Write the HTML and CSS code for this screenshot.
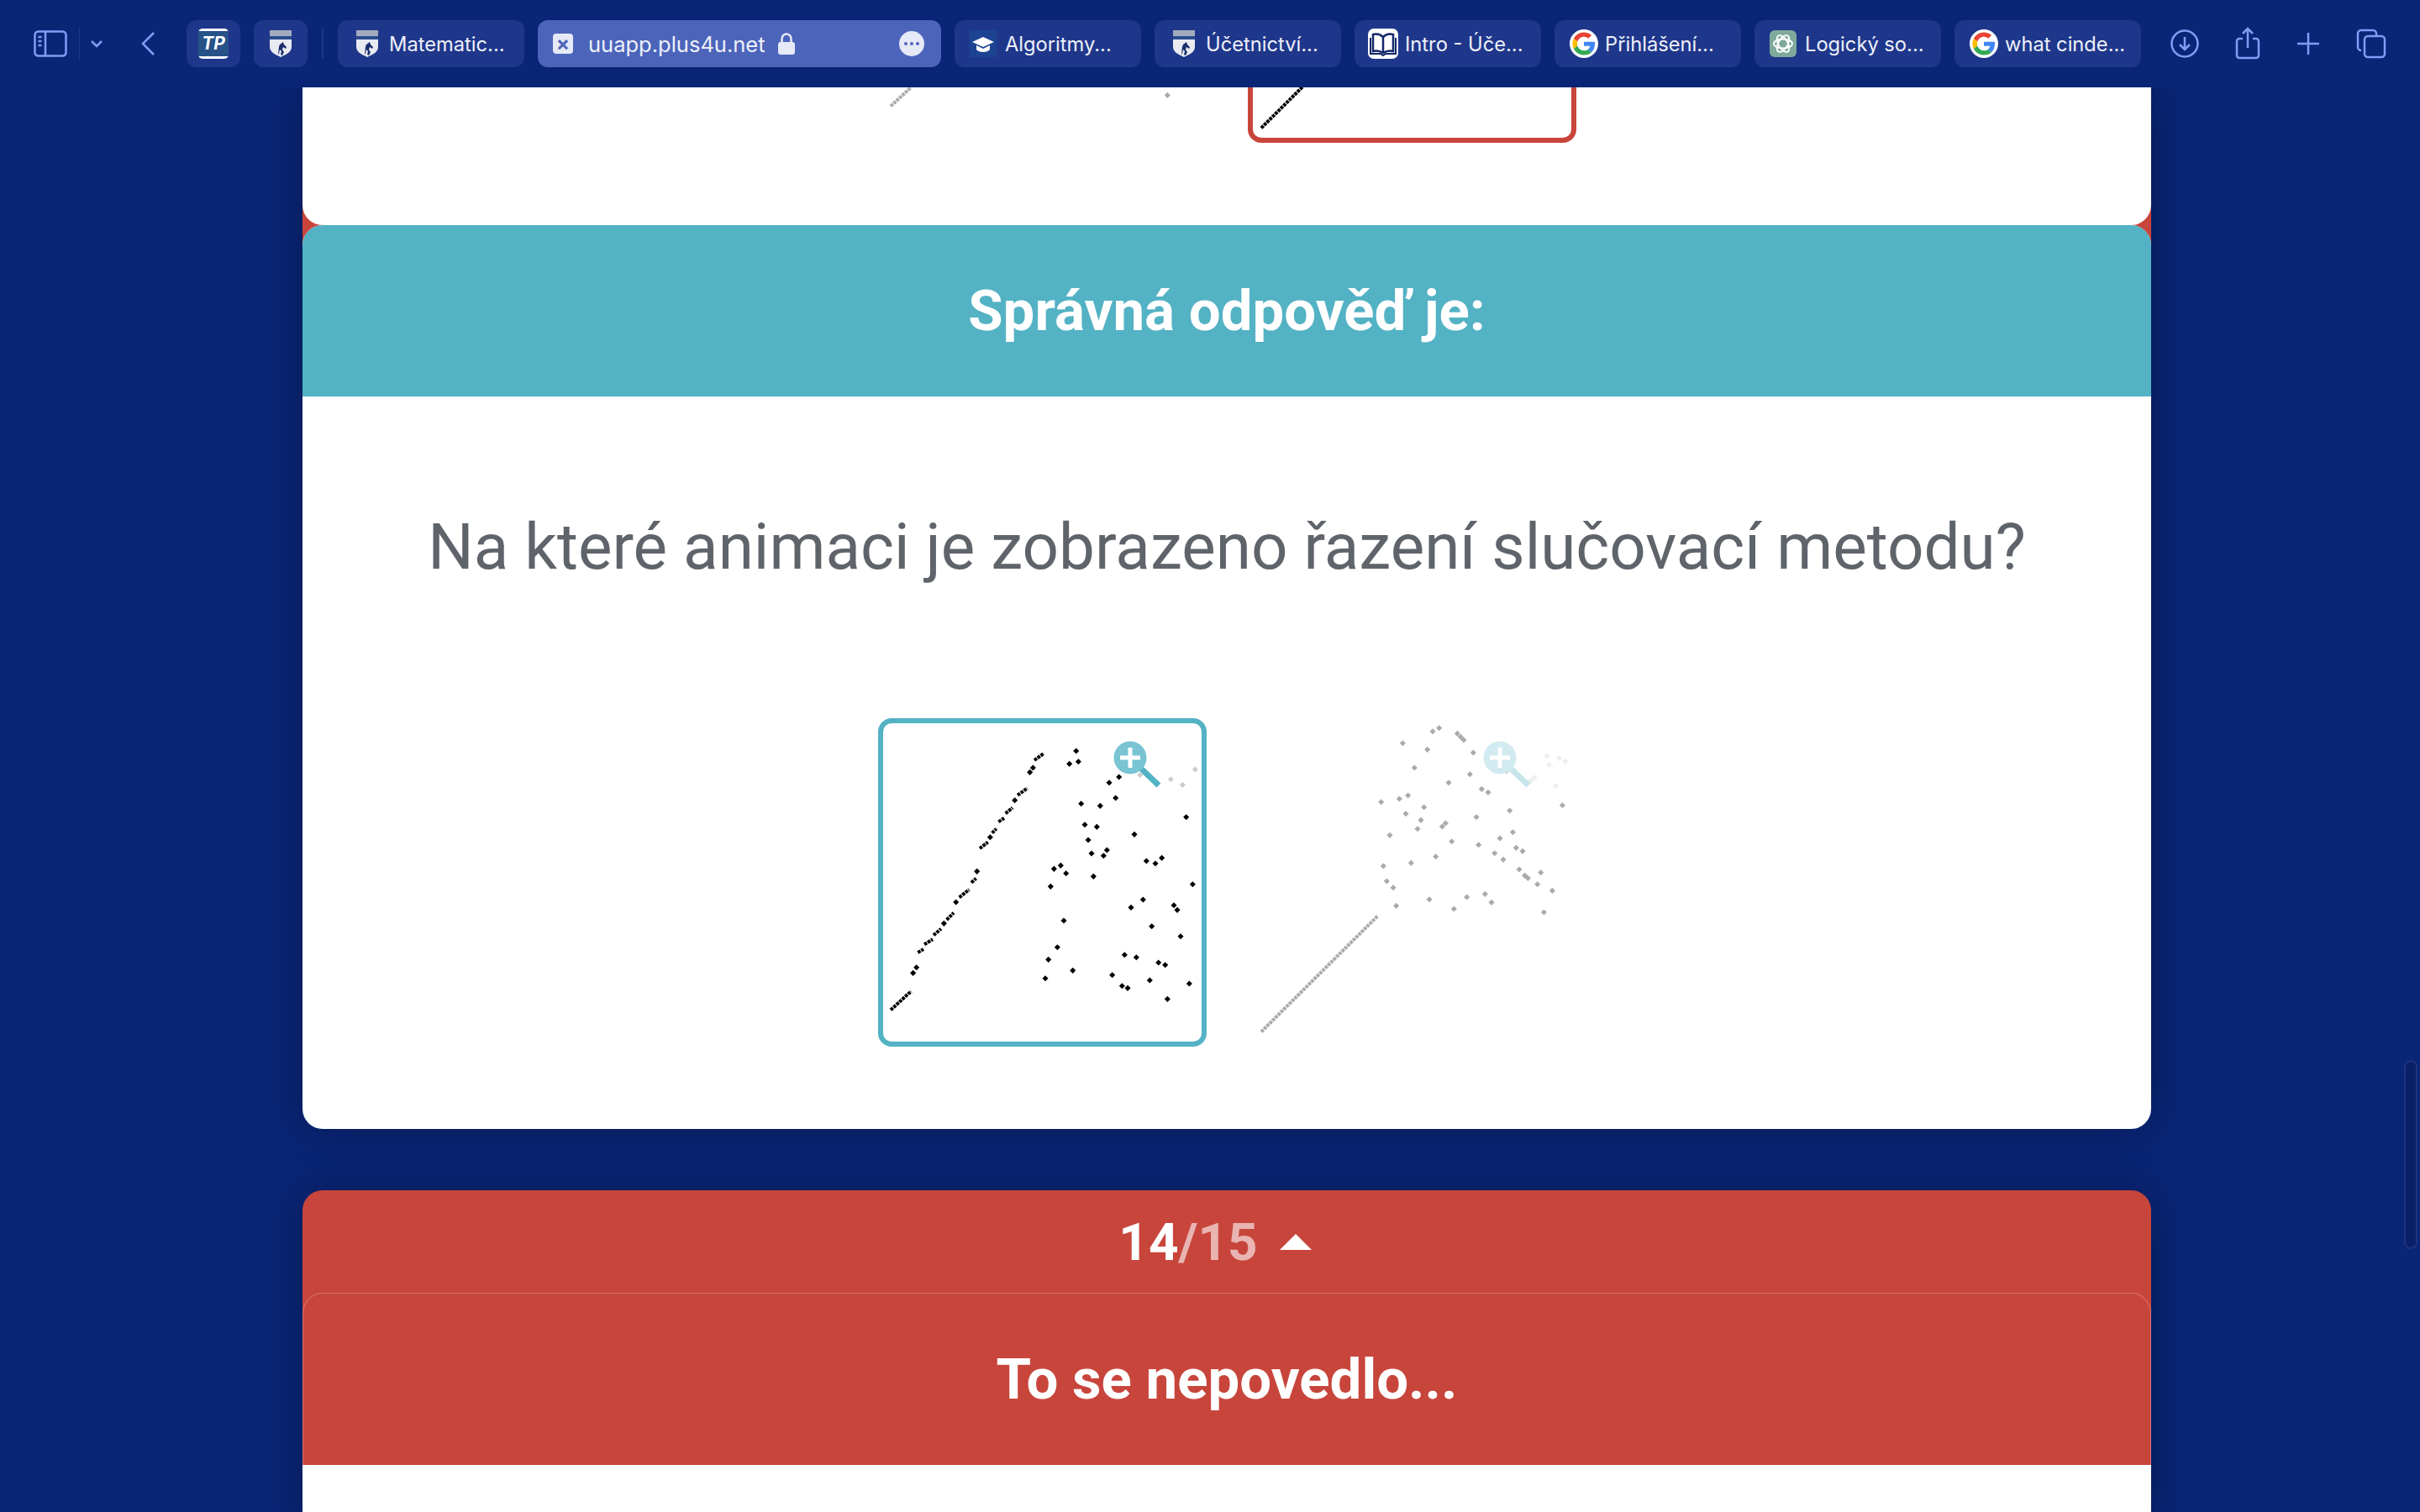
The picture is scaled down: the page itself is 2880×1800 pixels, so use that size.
FILE: index.html

```html
<!DOCTYPE html>
<html lang="cs">
<head>
<meta charset="utf-8"/>
<title>uuapp.plus4u.net</title>
<link rel="stylesheet" href="styles.css">
</head>
<body>

<svg class="sprite">
  <defs>
    <g id="shield">
      <path fill="#e9ebf2" d="M0 10h26v10c0 6-7 9-13 12C7 29 0 26 0 20z"/>
      <rect fill="#a3abbd" width="26" height="7"/>
      <rect fill="#2a4c90" y="7" width="26" height="4"/>
      <path fill="#1c2f6e" d="M10 29c1-5 0-8 2-12l4-3 1 3 3 3-1 2-3-2-1 3 2 3-2 4-2-1 1-4-2-2-1 5z"/>
    </g>
    <g id="google">
      <circle cx="24" cy="24" r="30" fill="#fff"/>
      <path fill="#ea4335" d="M24 9.5c3.54 0 6.71 1.22 9.21 3.6l6.85-6.85C35.9 2.38 30.47 0 24 0 14.62 0 6.51 5.38 2.56 13.22l7.98 6.19C12.43 13.72 17.74 9.5 24 9.5z"/>
      <path fill="#4285f4" d="M46.98 24.55c0-1.57-.15-3.09-.38-4.55H24v9.02h12.94c-.58 2.96-2.26 5.48-4.78 7.18l7.73 6c4.51-4.18 7.09-10.36 7.09-17.65z"/>
      <path fill="#fbbc05" d="M10.53 28.59c-.48-1.45-.76-2.99-.76-4.59s.27-3.14.76-4.59l-7.98-6.19C.92 16.46 0 20.12 0 24c0 3.88.92 7.54 2.56 10.78l7.97-6.19z"/>
      <path fill="#34a853" d="M24 48c6.48 0 11.93-2.13 15.89-5.81l-7.73-6c-2.15 1.45-4.92 2.3-8.16 2.3-6.26 0-11.57-4.22-13.47-9.91l-7.98 6.19C6.51 42.62 14.62 48 24 48z"/>
    </g>
    <!-- the two animation frames, coords taken at 3x -->
    <g id="anim-a">
      <path class="dash" d="M90 1087L163 1020M187 882L207 870M210 853L240 835M243 820L270 797M290 765L315 740M335 685L370 657M378 632L395 617M408 510L437 488M452 455L467 440M475 415L495 402M500 385L525 365M543 320L578 295M603 195L635 172"/>
      <path class="dots" d="M170 955l.1.1M182 935l.1.1M280 778l.1.1M323 702l.1.1M398 592l.1.1M445 470l.1.1M533 338l.1.1M587 238l.1.1M598 222l.1.1M752 162l.1.1M728 208l.1.1M760 200l.1.1M905 255l.1.1M870 275l.1.1M893 330l.1.1M770 350l.1.1M838 358l.1.1M783 425l.1.1M826 433l.1.1M960 460l.1.1M1145 398l.1.1M795 480l.1.1M807 528l.1.1M862 516l.1.1M850 536l.1.1M1003 555l.1.1M1035 564l.1.1M1058 544l.1.1M673 583l.1.1M697 571l.1.1M716 599l.1.1M661 646l.1.1M814 610l.1.1M1168 638l.1.1M948 721l.1.1M991 693l.1.1M1101 713l.1.1M1113 730l.1.1M708 768l.1.1M1022 788l.1.1M1125 824l.1.1M685 863l.1.1M653 907l.1.1M925 890l.1.1M967 899l.1.1M1046 918l.1.1M1070 926l.1.1M740 946l.1.1M642 974l.1.1M881 962l.1.1M916 1001l.1.1M936 1009l.1.1M1015 981l.1.1M1156 993l.1.1M1078 1048l.1.1"/>
      <path class="dots faded" d="M980 248l.1.1M1090 263l.1.1M1132 283l.1.1M1177 228l.1.1"/>
    </g>
    <g id="anim-b">
      <path class="dash" d="M93 1165L510 750"/>
      <path class="dots" d="M705 92l.1.1M728 80l.1.1M793 100l.1.1M805 112l.1.1M816 123l.1.1M598 134l.1.1M686 157l.1.1M850 168l.1.1M938 145l.1.1M640 222l.1.1M838 245l.1.1M968 233l.1.1M762 275l.1.1M880 298l.1.1M903 310l.1.1M521 344l.1.1M586 333l.1.1M617 321l.1.1M674 363l.1.1M609 386l.1.1M663 409l.1.1M651 440l.1.1M739 432l.1.1M751 420l.1.1M861 398l.1.1M980 375l.1.1M1168 356l.1.1M991 452l.1.1M552 463l.1.1M773 485l.1.1M869 497l.1.1M945 474l.1.1M1003 508l.1.1M1026 520l.1.1M926 527l.1.1M716 539l.1.1M957 550l.1.1M628 562l.1.1M529 573l.1.1M1014 585l.1.1M1034 607l.1.1M1045 616l.1.1M1091 596l.1.1M541 627l.1.1M564 650l.1.1M1079 638l.1.1M1132 661l.1.1M892 673l.1.1M827 684l.1.1M693 692l.1.1M915 703l.1.1M575 715l.1.1M781 726l.1.1M1102 738l.1.1"/>
      <path class="dots faded" d="M1113 180l.1.1M1156 188l.1.1M1178 199l.1.1M1121 211l.1.1M1068 257l.1.1M1055 268l.1.1M1144 287l.1.1"/>
    </g>
    <g id="zoom-badge">
      <path d="M33 33L54 53" fill="none" stroke="#53b2c4" stroke-width="7"/>
      <circle cx="20" cy="20" r="19.5" fill="#78c4d2"/>
      <path d="M8 17.500h9.500V8h5v9.500H32v5h-9.500V32h-5v-9.500H8z" fill="#fff"/>
    </g>
  </defs>
</svg>

<header class="toolbar">
  <div class="tool-group">
    <svg class="tool sidebar-icon" width="40" height="32" viewBox="0 0 40 32"><rect x="1.500" y="1.500" width="37" height="29" rx="4"/><path d="M14 1.500v29M5.500 8h4M5.500 13h4M5.500 18h4"/></svg>
    <span class="tool-sep"></span>
    <svg class="tool" width="16" height="10" viewBox="0 0 16 10"><path d="M2 2l6 6 6-6"/></svg>
    <svg class="tool back-icon" width="18" height="30" viewBox="0 0 18 30"><path d="M16 2L3 15l13 13"/></svg>
  </div>

  <div class="tab tab-pinned">
    <svg width="36" height="36" viewBox="0 0 36 36"><rect width="36" height="36" rx="5" fill="#fff"/><rect y="3" width="36" height="30" fill="#265288"/><text x="18" y="25" class="tp-text">TP</text></svg>
  </div>
  <div class="tab tab-pinned">
    <svg width="26" height="32" viewBox="0 0 26 32"><use href="#shield"/></svg>
  </div>
  <span class="pin-sep"></span>

  <div class="tab"><svg width="26" height="32" viewBox="0 0 26 32"><use href="#shield"/></svg><span>Matematic...</span></div>
  <div class="tab tab-active">
    <span class="tab-close">×</span>
    <span class="tab-url">uuapp.plus4u.net</span>
    <svg class="tab-lock" width="20" height="26" viewBox="0 0 20 26"><path d="M4.500 12V7a5.500 5.500 0 0 1 11 0v5" fill="none" stroke="#e6e9f6" stroke-width="2.500"/><rect y="11" width="20" height="15" rx="3" fill="#e6e9f6"/></svg>
    <span class="tab-more"><i></i><i></i><i></i></span>
  </div>
  <div class="tab tab-square"><svg width="32" height="32" viewBox="0 0 32 32"><rect width="32" height="32" fill="#1c4391"/><path d="M16 8L3 14l13 6 13-6z" fill="#fff"/><path d="M8 18v5c3 4 13 4 16 0v-5l-8 4z" fill="#fff"/></svg><span>Algoritmy...</span></div>
  <div class="tab"><svg width="26" height="32" viewBox="0 0 26 32"><use href="#shield"/></svg><span>Účetnictví...</span></div>
  <div class="tab tab-tight"><svg width="36" height="36" viewBox="0 0 36 36"><rect width="36" height="36" rx="7" fill="#fff"/><path d="M18 10c-3-3-8-4-12-3v20c4-1 9 0 12 2 3-2 8-3 12-2V7c-4-1-9 0-12 3zM18 10v19" fill="none" stroke="#15286a" stroke-width="2.500"/><path d="M3 11v19h12l3 2 3-2h12V11" fill="none" stroke="#15286a" stroke-width="2"/></svg><span>Intro - Úče...</span></div>
  <div class="tab tab-google"><svg width="34" height="34" viewBox="-6 -6 60 60"><use href="#google"/></svg><span>Přihlášení...</span></div>
  <div class="tab tab-square"><svg width="32" height="32" viewBox="0 0 32 32"><rect width="32" height="32" rx="6" fill="#7fa99b"/><g fill="none" stroke="#fff" stroke-width="1.800"><ellipse cx="16" cy="16" rx="11" ry="5.500"/><ellipse cx="16" cy="16" rx="11" ry="5.500" transform="rotate(60 16 16)"/><ellipse cx="16" cy="16" rx="11" ry="5.500" transform="rotate(120 16 16)"/></g></svg><span>Logický so...</span></div>
  <div class="tab tab-google"><svg width="34" height="34" viewBox="-6 -6 60 60"><use href="#google"/></svg><span>what cinde...</span></div>

  <div class="tool-group tool-right">
    <svg class="tool" width="34" height="34" viewBox="0 0 34 34"><circle cx="17" cy="17" r="15.500"/><path d="M17 9v15M11 18l6 6 6-6"/></svg>
    <svg class="tool" width="30" height="40" viewBox="0 0 30 40"><path d="M9 14H5a3 3 0 0 0-3 3v17a3 3 0 0 0 3 3h20a3 3 0 0 0 3-3V17a3 3 0 0 0-3-3h-4M15 25V3M9 8l6-6 6 6"/></svg>
    <svg class="tool" width="28" height="28" viewBox="0 0 28 28"><path d="M14 1v26M1 14h26"/></svg>
    <svg class="tool" width="36" height="36" viewBox="0 0 36 36"><path d="M6 26a4 4 0 0 1-4-4V6a4 4 0 0 1 4-4h14a4 4 0 0 1 4 4v3"/><rect x="10" y="9" width="24" height="25" rx="4"/></svg>
  </div>
</header>

<main class="page">
  <div class="stack">
    <div class="prev-wrap">
      <section class="prev-card">
        <div class="tiles">
          <div class="tile tile-dim"><svg class="anim" viewBox="63 63 1137 1137"><use href="#anim-a"/></svg><svg class="zoom-badge" viewBox="0 0 58 58"><use href="#zoom-badge"/></svg></div>
          <div class="tile tile-wrong"><svg class="anim" viewBox="63 63 1137 1137"><use href="#anim-b"/></svg><svg class="zoom-badge" viewBox="0 0 58 58"><use href="#zoom-badge"/></svg></div>
        </div>
      </section>
    </div>

    <section class="answer-card">
      <h2 class="card-head head-teal">Správná odpověď je:</h2>
      <div class="answer-body">
        <p class="question">Na které animaci je zobrazeno řazení slučovací metodu?</p>
        <div class="tiles">
          <div class="tile tile-right"><svg class="anim" viewBox="63 63 1137 1137"><use href="#anim-a"/></svg><svg class="zoom-badge" viewBox="0 0 58 58"><use href="#zoom-badge"/></svg></div>
          <div class="tile tile-dim"><svg class="anim" viewBox="63 63 1137 1137"><use href="#anim-b"/></svg><svg class="zoom-badge" viewBox="0 0 58 58"><use href="#zoom-badge"/></svg></div>
        </div>
      </div>
    </section>
  </div>

  <section class="next-card">
    <div class="counter">
      <span class="count">14<span class="count-total">/15</span></span>
      <span class="caret"></span>
    </div>
    <h2 class="card-head head-red">To se nepovedlo...</h2>
    <div class="next-body"></div>
  </section>
</main>

<div class="scroll-thumb"></div>

</body>
</html>
```

FILE: styles.css

```css
html, body { height: 100%; }
body {
  margin: 0;
  height: 1800px;
  overflow: hidden;
  background: #0a2576;
  font-family: Roboto, "Liberation Sans", sans-serif;
}
.sprite { display: none; }

/* browser bar */
.toolbar {
  position: relative;
  z-index: 2;
  display: flex;
  align-items: center;
  gap: 16px;
  height: 104px;
  padding: 0 0 0 40px;
  box-sizing: border-box;
  background: #0a2576;
  font-family: Inter, "Noto Sans", sans-serif;
  font-size: 23.7px;
  color: #eef0fa;
}
.tool-group { display: flex; align-items: center; }
.tool { fill: none; stroke: #7f9df5; stroke-width: 2.5; flex: none; }
.sidebar-icon { margin-right: 14px; }
.tool-sep { width: 1px; height: 40px; background: #1f378b; margin-right: 12px; }
.back-icon { margin: 0 21px 0 44px; }
.tool-right { margin-left: 19px; gap: 43px; }
.tab {
  display: flex;
  align-items: center;
  flex: none;
  gap: 13px;
  width: 222px;
  height: 56px;
  padding: 0 0 0 22px;
  box-sizing: border-box;
  border-radius: 12px;
  background: #1f378b;
  white-space: nowrap;
}
.tab-tight { gap: 8px; padding-left: 16px; }
.tab-google { gap: 8px; padding-left: 18px; }
.tab-square { gap: 10px; padding-left: 18px; }
.tab-pinned { width: 64px; padding: 0; justify-content: center; }
.tp-text { fill: #fff; font: italic 700 21px Inter, sans-serif; text-anchor: middle; }
.pin-sep { width: 2px; height: 36px; margin: 0 1px; background: #1f378b; }
.tab-active {
  width: 480px;
  padding: 0 20px 0 18px;
  background: #4c65bb;
  gap: 0;
}
.tab-close {
  width: 24px;
  height: 24px;
  border-radius: 4px;
  background: #e6e9f6;
  color: #4c65bb;
  font-size: 24px;
  line-height: 23px;
  font-weight: 700;
  text-align: center;
}
.tab-url { margin-left: 18px; font-size: 25.5px; }
.tab-lock { margin-left: 15px; }
.tab-more {
  display: flex;
  align-items: center;
  justify-content: center;
  gap: 3px;
  width: 30px;
  height: 30px;
  margin-left: auto;
  border-radius: 50%;
  background: #e6e9f6;
}
.tab-more i { width: 4px; height: 4px; border-radius: 50%; background: #4c65bb; }

/* quiz cards */
.page { width: 2200px; margin-left: 360px; }
.stack {
  border-radius: 0 0 24px 24px;
  box-shadow: 0 0 50px rgba(0,0,0,0.3);
}
.prev-wrap {
  height: 188px;
  margin-bottom: -24px;
  background: #c8453c;
}
.prev-card {
  display: flex;
  flex-direction: column;
  justify-content: flex-end;
  height: 164px;
  padding-bottom: 98px;
  box-sizing: border-box;
  overflow: hidden;
  background: #fff;
  border-radius: 0 0 24px 24px;
}
.tiles { display: flex; justify-content: center; gap: 49px; }
.tile {
  position: relative;
  flex: none;
  width: 391px;
  height: 391px;
  box-sizing: border-box;
  border: 6px solid transparent;
  border-radius: 16px;
}
.tile-right { border-color: #53b2c4; }
.tile-wrong { border-color: #c8453c; }
.tile-dim { opacity: 0.33; }
.anim { display: block; width: 100%; height: 100%; }
.dash { fill: none; stroke: #000; stroke-width: 12; stroke-dasharray: 11 3; }
.dots { fill: none; stroke: #000; stroke-width: 15; stroke-linecap: square; }
.faded { stroke-opacity: 0.2; }
.zoom-badge { position: absolute; top: 21px; left: 274px; width: 58px; height: 58px; }

.answer-card {
  border-radius: 24px;
  background: #fff;
}
.card-head {
  margin: 0;
  color: #fff;
  font-size: 67.2px;
  font-weight: 700;
  text-align: center;
  line-height: 205px;
  height: 204px;
  border-radius: 24px 24px 0 0;
}
.head-teal { background: #53b2c4; }
.answer-body { padding: 133px 0 98px; }
.question {
  margin: 0 0 158px;
  color: #5f646b;
  font-size: 76.4px;
  line-height: 92px;
  text-align: center;
}

.next-card {
  margin-top: 73px;
  height: 400px;
  border-radius: 24px 24px 0 0;
  background: #c8453c;
  box-shadow: 0 0 50px rgba(0,0,0,0.3);
}
.counter {
  display: flex;
  justify-content: center;
  align-items: center;
  gap: 26px;
  height: 122px;
  padding-right: 28px;
  box-sizing: border-box;
  color: #fff;
  font-size: 62px;
  font-weight: 700;
}
.count-total { opacity: 0.6; }
.caret {
  width: 0;
  height: 0;
  border-left: 19px solid transparent;
  border-right: 19px solid transparent;
  border-bottom: 19px solid #fff;
}
.head-red {
  background: #c8453c;
  border-top: 1px solid #d5716a;
  box-shadow: inset 1px 0 #d5716a, inset -1px 0 #d5716a;
}
.next-body { height: 60px; background: #fff; }

.scroll-thumb {
  position: absolute;
  top: 1262px;
  right: 3px;
  width: 16px;
  height: 225px;
  box-sizing: border-box;
  border: 2px solid #1b3380;
  border-radius: 8px;
  background: #0a1f68;
}
```
